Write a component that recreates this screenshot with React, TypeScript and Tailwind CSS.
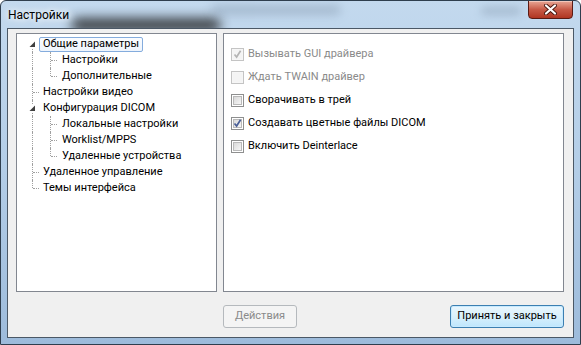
import React from "react";

type TreeRow = {
  label: string;
  level: 0 | 1;
  expanded?: boolean;
  selected?: boolean;
  topLine: "first" | "mid" | "last";
  childLine?: "mid" | "last";
};

const rows: TreeRow[] = [
  { label: "Общие параметры", level: 0, expanded: true, selected: true, topLine: "first" },
  { label: "Настройки", level: 1, topLine: "mid", childLine: "mid" },
  { label: "Дополнительные", level: 1, topLine: "mid", childLine: "last" },
  { label: "Настройки видео", level: 0, topLine: "mid" },
  { label: "Конфигурация DICOM", level: 0, expanded: true, topLine: "mid" },
  { label: "Локальные настройки", level: 1, topLine: "mid", childLine: "mid" },
  { label: "Worklist/MPPS", level: 1, topLine: "mid", childLine: "mid" },
  { label: "Удаленные устройства", level: 1, topLine: "mid", childLine: "last" },
  { label: "Удаленное управление", level: 0, topLine: "mid" },
  { label: "Темы интерфейса", level: 0, topLine: "last" },
];

const options = [
  { label: "Вызывать GUI драйвера", checked: true, disabled: true },
  { label: "Ждать TWAIN драйвер", checked: false, disabled: true },
  { label: "Сворачивать в трей", checked: false, disabled: false },
  { label: "Создавать цветные файлы DICOM", checked: true, disabled: false },
  { label: "Включить Deinterlace", checked: false, disabled: false },
];

function Row({ row }: { row: TreeRow }) {
  // vertical dotted line of the root level
  const vTop =
    row.topLine === "first" ? "top-[8px] h-[8px]" : row.topLine === "last" ? "top-0 h-[8px]" : "top-0 h-[16px]";
  return (
    <div className="relative h-[16px] flex items-center">
      <span className={`absolute left-[15px] w-0 border-l border-dotted border-[#a0a0a0] ${vTop}`} />
      {row.level === 0 && !row.expanded && (
        <span className="absolute left-[16px] top-[8px] w-[6px] h-0 border-t border-dotted border-[#a0a0a0]" />
      )}
      {row.level === 0 && row.expanded && (
        <svg className="absolute left-[11px] top-[4px] bg-white" width="9" height="9" viewBox="0 0 9 9">
          <polygon points="7,1.5 7,7 1.5,7" fill="#3f3f3f" />
        </svg>
      )}
      {row.level === 1 && (
        <>
          <span
            className={`absolute left-[33px] w-0 border-l border-dotted border-[#a0a0a0] ${
              row.childLine === "last" ? "top-0 h-[8px]" : "top-0 h-[16px]"
            }`}
          />
          <span className="absolute left-[34px] top-[8px] w-[6px] h-0 border-t border-dotted border-[#a0a0a0]" />
        </>
      )}
      <span
        className={`${row.level === 0 ? "ml-[22px]" : "ml-[41px]"} h-[15px] flex items-center px-[3px] rounded-[2px] border whitespace-nowrap ${
          row.selected ? "border-[#84acdd] bg-gradient-to-b from-[#fafcff] to-[#eef4fc]" : "border-transparent"
        }`}
      >
        {row.label}
      </span>
    </div>
  );
}

function Check({ checked, disabled }: { checked: boolean; disabled: boolean }) {
  return (
    <span
      className={`w-[13px] h-[13px] shrink-0 border flex items-center justify-center ${
        disabled ? "border-[#c4c4c4] bg-[#f6f6f6]" : "border-[#8e8f8f] bg-white"
      }`}
    >
      <span
        className={`w-[9px] h-[9px] flex items-center justify-center ${
          disabled ? "bg-[#f4f4f4]" : "bg-gradient-to-br from-[#d9d9d9] to-[#f6f6f6] border border-[#b9b9b9]"
        }`}
      >
        {checked && (
          <svg width="9" height="9" viewBox="0 0 9 9" className="overflow-visible">
            <path
              d="M1.5 4.5 L3.6 7 L7.6 0.8"
              fill="none"
              stroke={disabled ? "#b4b4b4" : "#4a5f97"}
              strokeWidth="1.7"
            />
          </svg>
        )}
      </span>
    </span>
  );
}

export default function App() {
  return (
    <div
      className="relative w-[581px] h-[345px] overflow-hidden flex flex-col border border-[#2f3e4e] rounded-t-[6px] bg-gradient-to-b from-[#c3d9ee] via-[#b3cde7] to-[#9dbbdb] text-[11px] text-black"
      style={{ fontFamily: 'Roboto, "Noto Sans", sans-serif' }}
    >
      {/* blurred glass shapes */}
      <div className="absolute left-[70px] top-[17px] w-[150px] h-[14px] rounded-full bg-[#1b1b1b] blur-[6px] opacity-80" />
      <div className="absolute left-[210px] top-[4px] w-[130px] h-[10px] rounded-full bg-[#7b8ea3] blur-[5px] opacity-40" />
      <div className="absolute left-[480px] top-[6px] w-[40px] h-[8px] rounded-full bg-[#7b8ea3] blur-[4px] opacity-40" />

      {/* title bar */}
      <div className="relative h-[27px] flex items-start shrink-0">
        <span className="pl-[7px] pt-[7px] text-[12px] leading-[15px] [text-shadow:0_0_6px_#fff,0_0_10px_#fff]">Настройки</span>
        <div className="flex-1" />
        <div className="mr-[7px] w-[45px] h-[19px] -mt-px rounded-b-[4px] border border-[#5a1b14] bg-gradient-to-b from-[#e8a796] via-[#c75a47] to-[#b03521] flex items-center justify-center shadow-[inset_0_1px_0_#f2c7bb]">
          <svg width="13" height="11" viewBox="0 0 13 11">
            <path d="M2 1.5 L11 9.5 M11 1.5 L2 9.5" stroke="#4a1810" strokeWidth="4" strokeLinecap="round" />
            <path d="M2 1.5 L11 9.5 M11 1.5 L2 9.5" stroke="#ffffff" strokeWidth="2.2" strokeLinecap="round" />
          </svg>
        </div>
      </div>

      {/* client area */}
      <div className="relative mx-[6px] mb-[6px] flex-1 border border-[#4b5866] bg-[#f0f0f0] flex flex-col pt-[4px] pl-[8px] pr-[9px]">
        <div className="flex gap-[6px] h-[259px]">
          <div className="w-[201px] border border-[#828790] bg-white pt-[2px]">
            {rows.map((r) => (
              <Row key={r.label} row={r} />
            ))}
          </div>
          <div className="flex-1 border border-[#828790] bg-white pt-[14px] pl-[7px] flex flex-col gap-[10px]">
            {options.map((o) => (
              <div key={o.label} className="h-[13px] flex items-center gap-[4px]">
                <Check checked={o.checked} disabled={o.disabled} />
                <span className={`whitespace-nowrap ${o.disabled ? "text-[#8a8a8a]" : ""}`}>{o.label}</span>
              </div>
            ))}
          </div>
        </div>
        <div className="flex justify-between mt-[13px] pl-[207px]">
          <button className="w-[74px] h-[23px] rounded-[3px] border border-[#b5b9bd] bg-[#f4f4f4] text-[#8a8a8a]">
            Действия
          </button>
          <button className="w-[114px] h-[23px] rounded-[3px] border border-[#3c7fb1] bg-gradient-to-b from-[#eaf6fd] via-[#d9f0fc] to-[#bee6fd] shadow-[inset_0_0_0_1px_#c7eaff]">
            Принять и закрыть
          </button>
        </div>
      </div>
    </div>
  );
}
